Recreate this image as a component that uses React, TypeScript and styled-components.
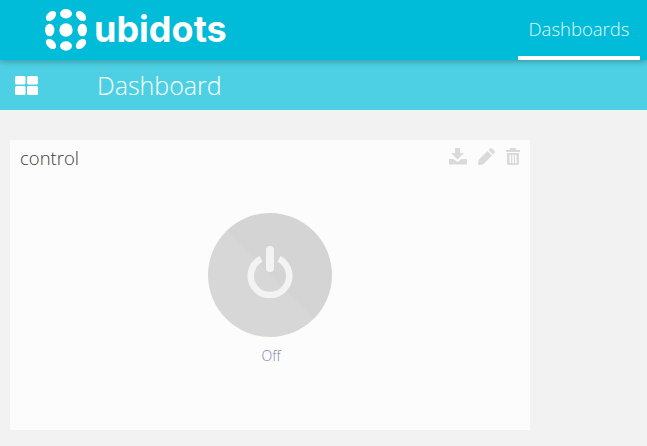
import { createGlobalStyle } from "styled-components";
import styled from "styled-components";

const GlobalStyle = createGlobalStyle`
  html, body {
    margin: 0;
    padding: 0;
    background: #f2f2f2;
    font-family: "Open Sans", "Liberation Sans", sans-serif;
    overflow: hidden;
  }
`;

const Page = () => {
  return (
    <>
      <GlobalStyle />
      <TopBar>
        <Brand>
          <LogoMark />
          <BrandName>ubidots</BrandName>
        </Brand>
        <NavItem>Dashboards</NavItem>
      </TopBar>
      <SubBar>
        <GridIcon />
        <PageTitle>Dashboard</PageTitle>
      </SubBar>
      <Card>
        <CardHeader>
          <CardTitle>control</CardTitle>
          <CardTools>
            <DownloadIcon />
            <PencilIcon />
            <TrashIcon />
          </CardTools>
        </CardHeader>
        <CardBody>
          <PowerButton>
            <PowerIcon />
          </PowerButton>
          <StateLabel>Off</StateLabel>
        </CardBody>
      </Card>
    </>
  );
};

const LogoMark = () => (
  <svg width="42" height="42" viewBox="0 0 42 42" fill="#fff">
    <ellipse cx="21" cy="4.700" rx="6" ry="4.700" />
    <circle cx="21" cy="21" r="6.700" />
    <ellipse cx="21" cy="37" rx="6" ry="4.700" />
    <ellipse cx="4.700" cy="21" rx="4.700" ry="6.300" />
    <ellipse cx="37.300" cy="21" rx="4.700" ry="6.300" />
    <ellipse cx="6" cy="7" rx="4" ry="6" transform="rotate(45 6 7)" />
    <ellipse cx="36" cy="7" rx="4" ry="6" transform="rotate(-45 36 7)" />
    <ellipse cx="6" cy="35" rx="4" ry="6" transform="rotate(-45 6 35)" />
    <ellipse cx="36" cy="35" rx="4" ry="6" transform="rotate(45 36 35)" />
  </svg>
);

const GridIcon = () => (
  <svg width="23" height="19" viewBox="0 0 23 19" fill="#fff">
    <rect x="0" y="0" width="10.500" height="8.500" rx="1.500" />
    <rect x="12" y="0" width="11" height="8.500" rx="1.500" />
    <rect x="0" y="10" width="10.500" height="9" rx="1.500" />
    <rect x="12" y="10" width="11" height="9" rx="1.500" />
  </svg>
);

const DownloadIcon = () => (
  <svg width="18" height="17" viewBox="0 0 18 17" fill="#dadada">
    <path d="M6 0h5v5h4l-6.500 6.500L2 5h4z" />
    <path d="M0 11h4.500l3 2.500h2l3-2.500H18v5.500H0z" />
  </svg>
);

const PencilIcon = () => (
  <svg width="17" height="17" viewBox="0 0 17 17" fill="#dadada">
    <path d="M12 0.500c.6-.5 1.400-.5 2 0l2.500 2.500c.5.600.5 1.400 0 2L15 6.500 10.500 2z" />
    <path d="M9.500 3 14 7.500 5 16.500 0 17l.5-5z" />
  </svg>
);

const TrashIcon = () => (
  <svg width="14" height="17" viewBox="0 0 14 17" fill="#dadada">
    <path d="M4.500 0h5l1 2H14v2H0V2h3.500z" />
    <path
      fillRule="evenodd"
      d="M1 5h12v10.500c0 .8-.7 1.500-1.500 1.500h-9C1.700 17 1 16.300 1 15.500zM3.500 7v8h1.500V7zM6.300 7v8h1.500V7zM9 7v8h1.500V7z"
    />
  </svg>
);

const PowerIcon = () => (
  <svg width="46" height="52" viewBox="0 0 46 52" fill="none" stroke="#f3f3f3">
    <path d="M14 12.800a19.250 19.250 0 1 0 18 0" strokeWidth="6.500" />
    <line x1="23" y1="4" x2="23" y2="22" strokeWidth="8" strokeLinecap="round" />
  </svg>
);

const TopBar = styled.header`
  position: relative;
  z-index: 1;
  display: flex;
  justify-content: space-between;
  align-items: stretch;
  height: 60px;
  padding: 0 7px 0 45px;
  background: #00bcd8;
  box-shadow: 0 2px 6px rgba(0, 0, 0, 0.25);
`;

const Brand = styled.div`
  display: flex;
  align-items: center;
  gap: 7px;
`;

const BrandName = styled.span`
  color: #fff;
  font-family: "Inter", "Liberation Sans", sans-serif;
  font-size: 36px;
  font-weight: 700;
  line-height: 1;
  margin-top: -2px;
`;

const NavItem = styled.div`
  display: flex;
  align-items: center;
  justify-content: center;
  box-sizing: border-box;
  width: 122px;
  color: #e3f8fb;
  font-size: 18.500px;
  font-weight: 300;
  border-bottom: 4px solid #fff;
`;

const SubBar = styled.div`
  display: flex;
  align-items: center;
  height: 50px;
  padding-left: 15px;
  background: #4dd0e4;
`;

const PageTitle = styled.h1`
  margin: -1px 0 0 59px;
  color: #fff;
  font-size: 25px;
  font-weight: 300;
`;

const Card = styled.section`
  box-sizing: border-box;
  width: 520px;
  height: 290px;
  margin: 30px 0 0 10px;
  padding: 7px 10px 0;
  background: #fcfcfc;
`;

const CardHeader = styled.div`
  display: flex;
  justify-content: space-between;
  align-items: center;
`;

const CardTitle = styled.h2`
  margin: 0;
  color: #3a3a3a;
  font-size: 18.500px;
  font-weight: 300;
  line-height: 22px;
`;

const CardTools = styled.div`
  display: flex;
  align-items: center;
  gap: 11px;
  margin-top: -3px;
`;

const CardBody = styled.div`
  display: flex;
  flex-direction: column;
  align-items: center;
  padding-top: 44px;
`;

const PowerButton = styled.div`
  display: flex;
  align-items: center;
  justify-content: center;
  box-sizing: border-box;
  width: 124px;
  height: 124px;
  padding-bottom: 6px;
  border-radius: 50%;
  background: linear-gradient(45deg, #d7d7d7 50%, #d4d4d4 50%);
`;

const StateLabel = styled.span`
  margin: 9px 0 0 2px;
  color: #7a84ad;
  font-size: 14px;
  font-weight: 300;
`;

export default Page;
